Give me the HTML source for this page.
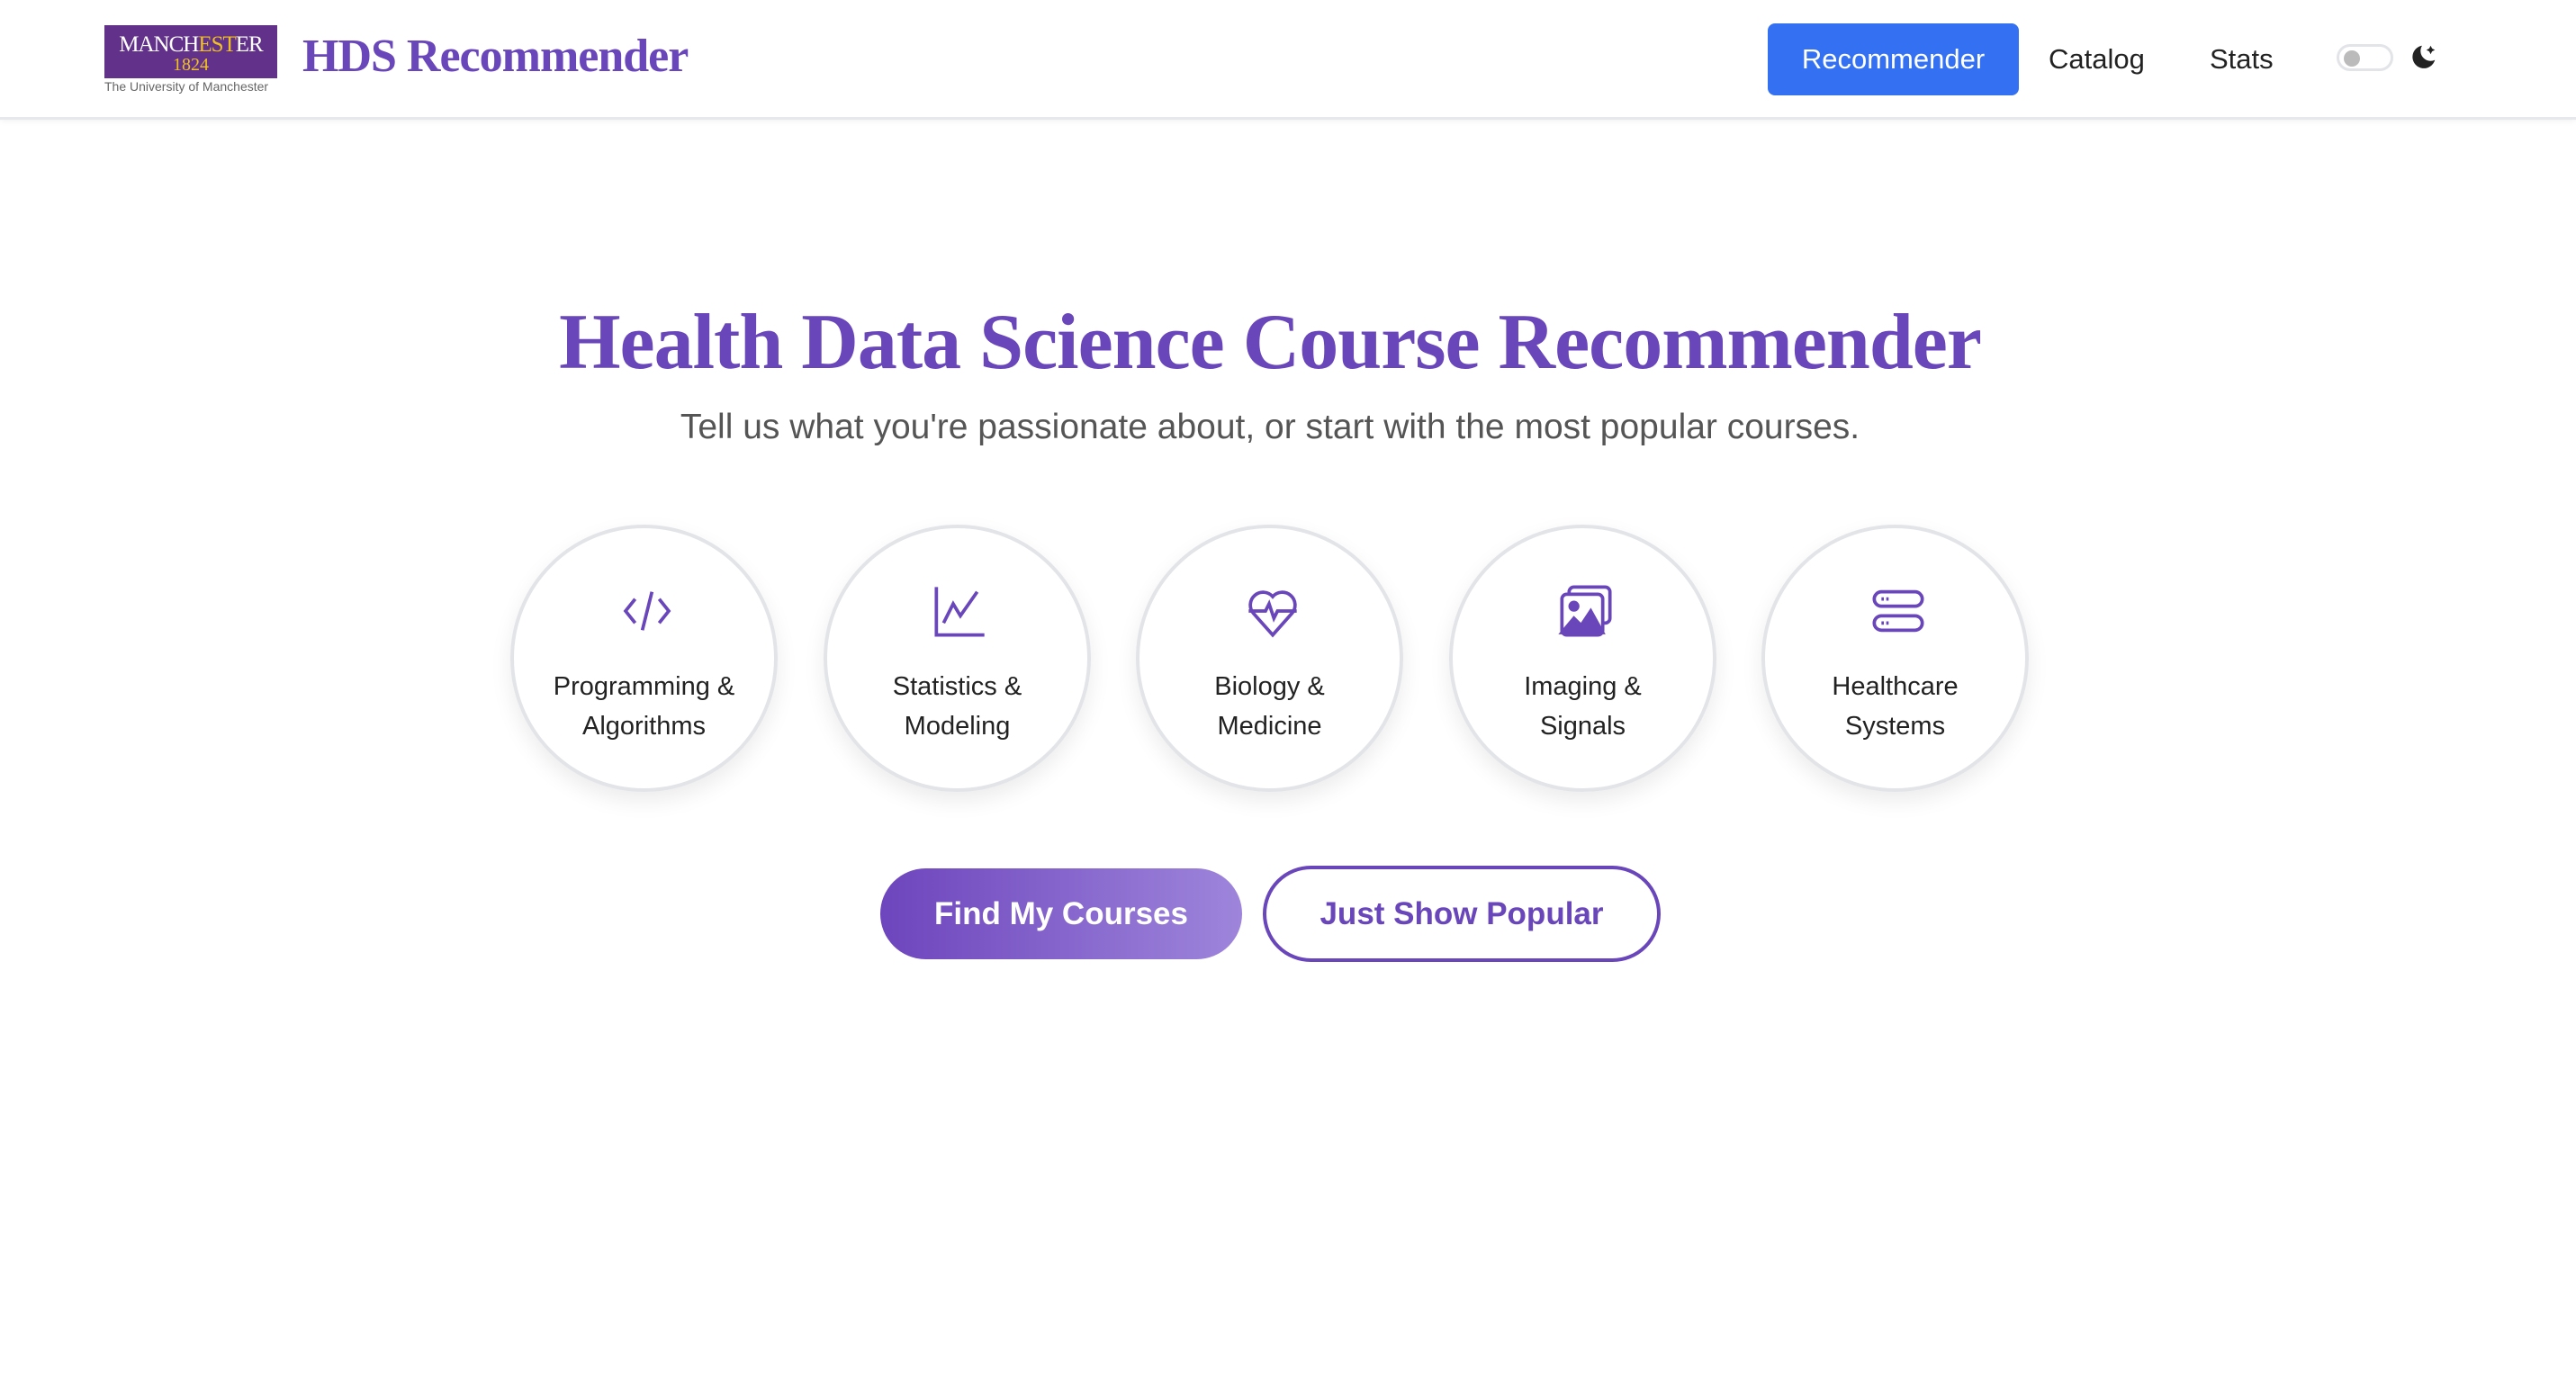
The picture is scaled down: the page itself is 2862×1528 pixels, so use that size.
<!DOCTYPE html>
<html><head><meta charset="utf-8"><style>
*{box-sizing:border-box;margin:0;padding:0}
body{width:2862px;height:1528px;background:#fff;font-family:"Liberation Sans",sans-serif;position:relative;overflow:hidden}
.hdr{position:absolute;left:0;top:0;width:2862px;height:133px;border-bottom:3px solid #e6e8eb;box-shadow:0 2px 6px rgba(0,0,0,.05)}
.logo{position:absolute;left:116px;top:28px;width:192px;height:59px;background:#62328a;color:#fff;font-family:"Liberation Serif",serif;text-align:center}
.logo .m{font-size:25px;line-height:26px;padding-top:9px;letter-spacing:-1px}
.logo .y{font-size:20px;line-height:18px;color:#f0c020}
.logo .m b{font-weight:normal;color:#f0c020}
.uni{position:absolute;left:116px;top:88px;font-size:14px;color:#666}
.title{position:absolute;left:336px;top:33px;font-family:"Liberation Serif",serif;font-weight:bold;font-size:52px;color:#6a46bb;letter-spacing:-1px}
.btn{position:absolute;left:1964px;top:26px;width:279px;height:80px;background:#3370f2;border-radius:8px;color:#fff;font-size:31px;text-align:center;line-height:80px}
.nav{position:absolute;top:26px;line-height:80px;font-size:31px;color:#222}
.tog{position:absolute;left:2596px;top:49px;width:63px;height:30px;border:3px solid #e2e4e8;border-radius:15px}
.tog i{position:absolute;left:5px;top:4px;width:18px;height:18px;border-radius:50%;background:#bbb}
h1{position:absolute;left:0;width:2822px;top:330px;text-align:center;font-family:"Liberation Serif",serif;font-weight:bold;font-size:88px;color:#6a46bb;letter-spacing:-1px}
.sub{position:absolute;left:0;width:2822px;top:453px;text-align:center;font-size:39px;color:#555}
.c{position:absolute;top:583px;width:297px;height:297px;border-radius:50%;border:4px solid #e2e4e8;box-shadow:0 10px 24px rgba(0,0,0,.08);text-align:center}
.c svg{position:absolute;left:116px;top:60px}
.c p{position:absolute;left:0;right:0;top:154px;font-size:29px;line-height:44px;color:#222}
.b1{position:absolute;left:978px;top:965px;width:402px;height:101px;border-radius:51px;background:linear-gradient(90deg,#6d45bd,#9e85db);color:#fff;font-weight:bold;font-size:35px;text-align:center;line-height:101px}
.b2{position:absolute;left:1403px;top:962px;width:442px;height:107px;border-radius:54px;border:4px solid #6a46bb;color:#6a46bb;font-weight:bold;font-size:35px;text-align:center;line-height:99px}
</style></head><body>
<div class="hdr">
<div class="logo"><div class="m">MANCH<b>EST</b>ER</div><div class="y">1824</div></div>
<div class="uni">The University of Manchester</div>
<div class="title">HDS Recommender</div>
<div class="btn">Recommender</div>
<div class="nav" style="left:2276px">Catalog</div>
<div class="nav" style="left:2455px">Stats</div>
<div class="tog"><i></i></div>
<svg style="position:absolute;left:2672px;top:46px" width="38" height="38" viewBox="0 0 24 24"><path d="M12 3a8 8 0 1 0 9 10 7 7 0 0 1-9-10z" fill="#222"/><path d="M18 3l1 2 2 1-2 1-1 2-1-2-2-1 2-1z" fill="#222"/></svg>
</div>
<h1>Health Data Science Course Recommender</h1>
<div class="sub">Tell us what you're passionate about, or start with the most popular courses.</div>

<div class="c" style="left:567px"><svg width="64" height="64" viewBox="0 0 24 24" fill="none" stroke="#6a46bb" stroke-width="1.4"><path d="M7 7l-4 5 4 5M17 7l4 5-4 5M14 4l-4 16"/></svg><p>Programming &amp;<br>Algorithms</p></div>
<div class="c" style="left:915px"><svg width="64" height="64" viewBox="0 0 24 24" fill="none" stroke="#6a46bb" stroke-width="1.4"><path d="M2 2v20h20"/><path d="M5 17l4-8 3 5 7-10"/></svg><p>Statistics &amp;<br>Modeling</p></div>
<div class="c" style="left:1262px"><svg width="64" height="64" viewBox="0 0 24 24" fill="none" stroke="#6a46bb" stroke-width="1.4"><path d="M12 22l-8-9a5 5 0 0 1 8-7 5 5 0 0 1 8 7z"/><path d="M2 12h7l1.5-3 2 6 1.5-3h8"/></svg><p>Biology &amp;<br>Medicine</p></div>
<div class="c" style="left:1610px"><svg width="64" height="64" viewBox="0 0 24 24" fill="none" stroke="#6a46bb" stroke-width="1.4"><rect x="5" y="2" width="17" height="15" rx="2"/><rect x="2" y="5" width="17" height="17" rx="2" fill="#fff"/><circle cx="7" cy="10" r="1.6" fill="#6a46bb"/><path d="M2 21l5-6 3 3 4-6 5 9z" fill="#6a46bb"/></svg><p>Imaging &amp;<br>Signals</p></div>
<div class="c" style="left:1957px"><svg width="64" height="64" viewBox="0 0 24 24" fill="none" stroke="#6a46bb" stroke-width="1.4"><rect x="2" y="4" width="20" height="6" rx="3"/><rect x="2" y="14" width="20" height="6" rx="3"/><path d="M5 7h1M7 7h1M5 17h1M7 17h1"/></svg><p>Healthcare<br>Systems</p></div>

<div class="b1">Find My Courses</div>
<div class="b2">Just Show Popular</div>
</body></html>
